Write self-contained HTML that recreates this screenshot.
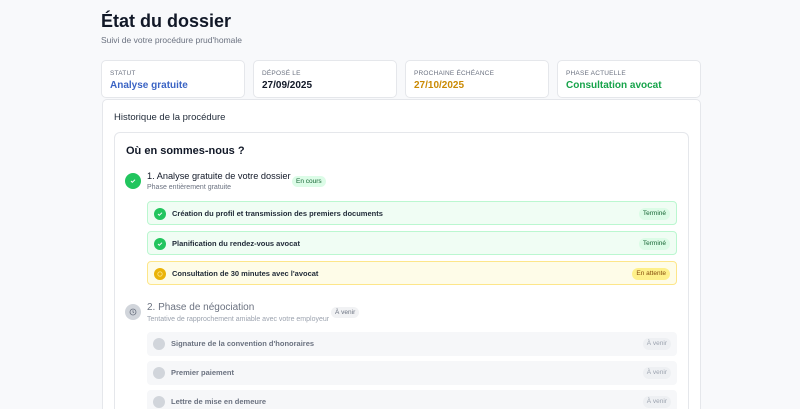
<!DOCTYPE html><html><head><meta charset="utf-8"><style>
*{box-sizing:border-box;margin:0;padding:0}
html,body{width:800px;height:409px;overflow:hidden}
body{background:#f8f9fb;font-family:"Liberation Sans",sans-serif;color:#111827;position:relative}
.a{position:absolute}
.card{position:absolute;top:60px;height:38px;width:144px;background:#fff;border:1px solid #e5e7eb;border-radius:5px;padding:9px 8px}
.lab{font-size:6.5px;color:#6b7280;text-transform:uppercase;letter-spacing:.2px}
.val{font-size:10px;font-weight:bold;margin-top:3px}
.row{position:absolute;left:147px;width:530px;height:24px;border-radius:4px;font-size:7.5px;font-weight:bold;padding-left:24px;line-height:24px;color:#1f2937}
.row .dot{position:absolute;left:6px;top:6px;width:12px;height:12px;border-radius:50%}
.row .b{position:absolute;right:6px;top:6px;height:12px;line-height:12px;font-size:6.5px;font-weight:normal;padding:0 4px;border-radius:6px}
.g{background:#f0fdf4;border:1px solid #bbf7d0}
.g .dot{background:#22c55e}.g .b{background:#dcfce7;color:#166534}
.y{background:#fefce8;border:1px solid #fde68a}
.y .dot{background:#eab308}.y .b{background:#fef08a;color:#854d0e}
.n{background:#f6f7f9;color:#6b7280}
.n .dot{background:#d1d5db}.n .b{background:#eef0f3;color:#9ca3af}
.chk{position:absolute;left:3px;top:3px;width:6px;height:6px}
</style></head><body>
<div class="a" style="left:101px;top:11px;font-size:18px;font-weight:bold">État du dossier</div>
<div class="a" style="left:101px;top:35px;font-size:8.5px;color:#6b7280">Suivi de votre procédure prud'homale</div>
<div class="card" style="left:101px"><div class="lab">Statut</div><div class="val" style="color:#3b64c4">Analyse gratuite</div></div>
<div class="card" style="left:253px"><div class="lab">Déposé le</div><div class="val">27/09/2025</div></div>
<div class="card" style="left:405px"><div class="lab">Prochaine échéance</div><div class="val" style="color:#ca8a04">27/10/2025</div></div>
<div class="card" style="left:557px"><div class="lab">Phase actuelle</div><div class="val" style="color:#16a34a">Consultation avocat</div></div>
<div class="a" style="left:102px;top:99px;width:599px;height:330px;background:#fff;border:1px solid #e5e7eb;border-radius:5px"></div>
<div class="a" style="left:114px;top:112px;font-size:9.5px;color:#1f2937">Historique de la procédure</div>
<div class="a" style="left:114px;top:132px;width:575px;height:300px;background:#fff;border:1px solid #e5e7eb;border-radius:6px"></div>
<div class="a" style="left:126px;top:145px;font-size:11px;font-weight:bold">Où en sommes-nous ?</div>
<div class="a" style="left:125px;top:173px;width:16px;height:16px;border-radius:50%;background:#22c55e"><svg class="chk" style="left:5px;top:5px" viewBox="0 0 6 6"><path d="M1 3l1.3 1.3L5 1.7" stroke="#fff" stroke-width="1" fill="none"/></svg></div>
<div class="a" style="left:147px;top:171px;font-size:9.2px">1. Analyse gratuite de votre dossier</div>
<div class="a" style="left:147px;top:184px;font-size:7px;color:#6b7280">Phase entièrement gratuite</div>
<div class="a" style="left:292px;top:176px;height:11px;line-height:11px;padding:0 4px;font-size:6.5px;background:#dcfce7;color:#166534;border-radius:6px">En cours</div>
<div class="row g" style="top:201px"><span class="dot"><svg class="chk" viewBox="0 0 6 6"><path d="M1 3l1.3 1.3L5 1.7" stroke="#fff" stroke-width="1" fill="none"/></svg></span>Création du profil et transmission des premiers documents<span class="b">Terminé</span></div>
<div class="row g" style="top:231px"><span class="dot"><svg class="chk" viewBox="0 0 6 6"><path d="M1 3l1.3 1.3L5 1.7" stroke="#fff" stroke-width="1" fill="none"/></svg></span>Planification du rendez-vous avocat<span class="b">Terminé</span></div>
<div class="row y" style="top:261px"><span class="dot"><svg class="chk" viewBox="0 0 6 6"><circle cx="3" cy="3" r="2.2" stroke="#fde68a" stroke-width=".8" fill="none"/></svg></span>Consultation de 30 minutes avec l'avocat<span class="b">En attente</span></div>
<div class="a" style="left:125px;top:304px;width:16px;height:16px;border-radius:50%;background:#d1d5db"><svg style="position:absolute;left:4px;top:4px;width:8px;height:8px" viewBox="0 0 8 8"><circle cx="4" cy="4" r="3" stroke="#6b7280" stroke-width=".8" fill="none"/><path d="M4 2.3V4l1 .8" stroke="#6b7280" stroke-width=".8" fill="none"/></svg></div>
<div class="a" style="left:147px;top:302px;font-size:10px;color:#6b7280">2. Phase de négociation</div>
<div class="a" style="left:147px;top:316px;font-size:7px;color:#9ca3af">Tentative de rapprochement amiable avec votre employeur</div>
<div class="a" style="left:331px;top:307px;height:11px;line-height:11px;padding:0 4px;font-size:6.5px;background:#f1f2f4;color:#6b7280;border-radius:6px">À venir</div>
<div class="row n" style="top:332px"><span class="dot"></span>Signature de la convention d'honoraires<span class="b">À venir</span></div>
<div class="row n" style="top:361px"><span class="dot"></span>Premier paiement<span class="b">À venir</span></div>
<div class="row n" style="top:390px"><span class="dot"></span>Lettre de mise en demeure<span class="b">À venir</span></div>
</body></html>
